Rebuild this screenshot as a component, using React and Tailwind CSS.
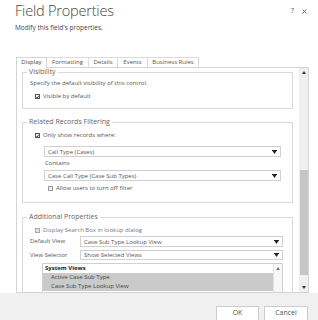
import React from "react";

const Arrow = () => (
  <svg width="5" height="4" viewBox="0 0 5 4" className="shrink-0">
    <rect x="0" y="0" width="5" height="1" fill="#222" />
    <path d="M0.5 1 L4.5 1 L2.5 4 Z" fill="#222" />
  </svg>
);

const Select = ({ children, className = "" }) => (
  <div className={"flex items-center justify-between border border-[#d0d0d0] bg-white pl-[3px] pr-[3px] text-[#555] " + className}>
    <span className="leading-[8px]">{children}</span>
    <Arrow />
  </div>
);

const Check = ({ checked, disabled }) => (
  <div
    className={
      "w-[5px] h-[5px] shrink-0 border flex items-center justify-center " +
      (disabled ? "border-[#a8a8a8] bg-[#e6e6e6]" : checked ? "border-[#555] bg-[#f4f4f4]" : "border-[#999] bg-[#eee]")
    }
  >
    {checked && (
      <svg width="4" height="4" viewBox="0 0 4 4">
        <path d="M0.5 2 L1.6 3.2 L3.6 0.6" stroke="#111" strokeWidth="1" fill="none" />
      </svg>
    )}
  </div>
);

const Legend = ({ children }) => (
  <legend className="-ml-[3px] px-[2px] text-[7px] leading-[8px] text-[#666]">{children}</legend>
);

export default function App() {
  return (
    <div className="w-[318px] h-[320px] bg-white overflow-hidden flex flex-col font-['Open_Sans','Liberation_Sans',sans-serif] text-[6px] text-[#555]">
      {/* Header */}
      <div className="h-[57px] shrink-0 pl-[15px] pr-[11px]">
        <div className="pt-[3px] flex justify-between items-start">
          <div className="text-[14.5px] leading-[16px] font-light text-[#444] tracking-[-0.2px]">Field Properties</div>
          <div className="flex items-center gap-[8px] pt-[4px] text-[#555]">
            <span className="text-[7px] leading-[8px]">?</span>
            <svg width="5" height="5" viewBox="0 0 5 5">
              <path d="M0.5 0.5 L4.5 4.5 M4.5 0.5 L0.5 4.5" stroke="#555" strokeWidth="0.9" />
            </svg>
          </div>
        </div>
        <div className="mt-[5px] text-[6.5px] leading-[8px] text-[#444]">Modify this field's properties.</div>
      </div>

      {/* Tabs */}
      <div className="ml-[16px] flex items-end h-[10px] shrink-0">
        <div className="relative z-10 w-[31px] h-[11px] -mb-px border border-b-0 border-[#d4d4d4] bg-white flex items-center justify-center pb-px text-[#444]">Display</div>
        <div className="w-[42px] h-[10px] border-t border-r border-[#dcdcdc] flex items-center justify-center">Formatting</div>
        <div className="w-[29px] h-[10px] border-t border-r border-[#dcdcdc] flex items-center justify-center">Details</div>
        <div className="w-[30px] h-[10px] border-t border-r border-[#dcdcdc] flex items-center justify-center">Events</div>
        <div className="w-[51px] h-[10px] border-t border-r border-[#dcdcdc] flex items-center justify-center">Business Rules</div>
      </div>

      {/* Panel */}
      <div className="ml-[16px] w-[293px] h-[226px] shrink-0 border border-[#d4d4d4] flex overflow-hidden">
        <div className="flex-1 overflow-hidden pl-[5px] pr-[6px]">
          {/* Visibility */}
          <fieldset className="border border-[#d9d9d9] h-[41px] px-[7px]">
            <Legend>Visibility</Legend>
            <div className="h-[9px] mt-[3px] flex items-center">Specify the default visibility of this control.</div>
            <div className="h-[9px] mt-[4px] flex items-center gap-[3px] pl-[5px]">
              <Check checked />
              <span>Visible by default</span>
            </div>
          </fieldset>

          {/* Related Records Filtering */}
          <fieldset className="mt-[9px] border border-[#d9d9d9] h-[85px] pl-[7px] pr-[11px]">
            <Legend>Related Records Filtering</Legend>
            <div className="h-[9px] mt-[5px] flex items-center gap-[3px] pl-[5px]">
              <Check checked />
              <span>Only show records where:</span>
            </div>
            <Select className="h-[11px] mt-[6px] ml-[14px]">Call Type (Cases)</Select>
            <div className="h-[9px] mt-[2px] pl-[15px] flex items-center">Contains</div>
            <Select className="h-[11px] mt-[2px] ml-[14px]">Case Call Type (Case Sub Types)</Select>
            <div className="h-[9px] mt-[3px] flex items-center gap-[3px] pl-[18px]">
              <Check />
              <span>Allow users to turn off filter</span>
            </div>
          </fieldset>

          {/* Additional Properties */}
          <fieldset className="mt-[10px] border border-[#d9d9d9] h-[120px] pl-[7px] pr-[9px]">
            <Legend>Additional Properties</Legend>
            <div className="h-[9px] mt-[5px] flex items-center gap-[3px] pl-[5px] text-[#777]">
              <Check disabled />
              <span>Display Search Box in lookup dialog</span>
            </div>
            <div className="flex items-center mt-[1px] h-[11px]">
              <span className="w-[50px] shrink-0">Default View</span>
              <Select className="flex-1 h-[11px]">Case Sub Type Lookup View</Select>
            </div>
            <div className="flex items-center mt-[3px] h-[10px]">
              <span className="w-[50px] shrink-0">View Selector</span>
              <Select className="flex-1 h-[10px]">Show Selected Views</Select>
            </div>
            <div className="mt-[3px] ml-[12px] h-[40px] border border-[#cfcfcf] flex">
              <div className="flex-1 flex flex-col">
                <div className="h-[9px] flex items-center pl-[2px] font-bold text-[#222]">System Views</div>
                <div className="h-[9px] flex items-center pl-[8px] bg-[#cacaca] text-[#444]">Active Case Sub Type</div>
                <div className="h-[9px] flex items-center pl-[8px] bg-[#cacaca] text-[#444]">Case Sub Type Lookup View</div>
                <div className="h-[9px] flex items-center pl-[8px]">Lookup Case Sub Types</div>
              </div>
              <div className="w-[9px] border-l border-[#e2e2e2] bg-[#f7f7f7] flex justify-center pt-[3px]">
                <svg width="4" height="3" viewBox="0 0 4 3"><path d="M0 3 L4 3 L2 0 Z" fill="#777" /></svg>
              </div>
            </div>
          </fieldset>
        </div>

        {/* Scrollbar */}
        <div className="w-[9px] shrink-0 bg-[#f0f0f0] flex flex-col items-center">
          <div className="h-[9px] flex items-center justify-center">
            <svg width="4" height="3" viewBox="0 0 4 3"><path d="M0 3 L4 3 L2 0 Z" fill="#333" /></svg>
          </div>
          <div className="mt-[93px] w-[8px] h-[105px] bg-[#c6c6c6]" />
          <div className="flex-1" />
          <div className="h-[9px] flex items-center justify-center">
            <svg width="4" height="3" viewBox="0 0 4 3"><path d="M0 0 L4 0 L2 3 Z" fill="#333" /></svg>
          </div>
        </div>
      </div>

      {/* Footer */}
      <div className="flex-1 bg-[#f0f0f0] flex justify-end items-start gap-[5px] pt-[13px] pr-[10px]">
        <div className="w-[43px] h-[15px] shrink-0 bg-white border border-[#cccccc] flex items-center justify-center text-[7px] text-[#555]">OK</div>
        <div className="w-[44px] h-[15px] shrink-0 bg-white border border-[#cccccc] flex items-center justify-center text-[7px] text-[#555]">Cancel</div>
      </div>
    </div>
  );
}
